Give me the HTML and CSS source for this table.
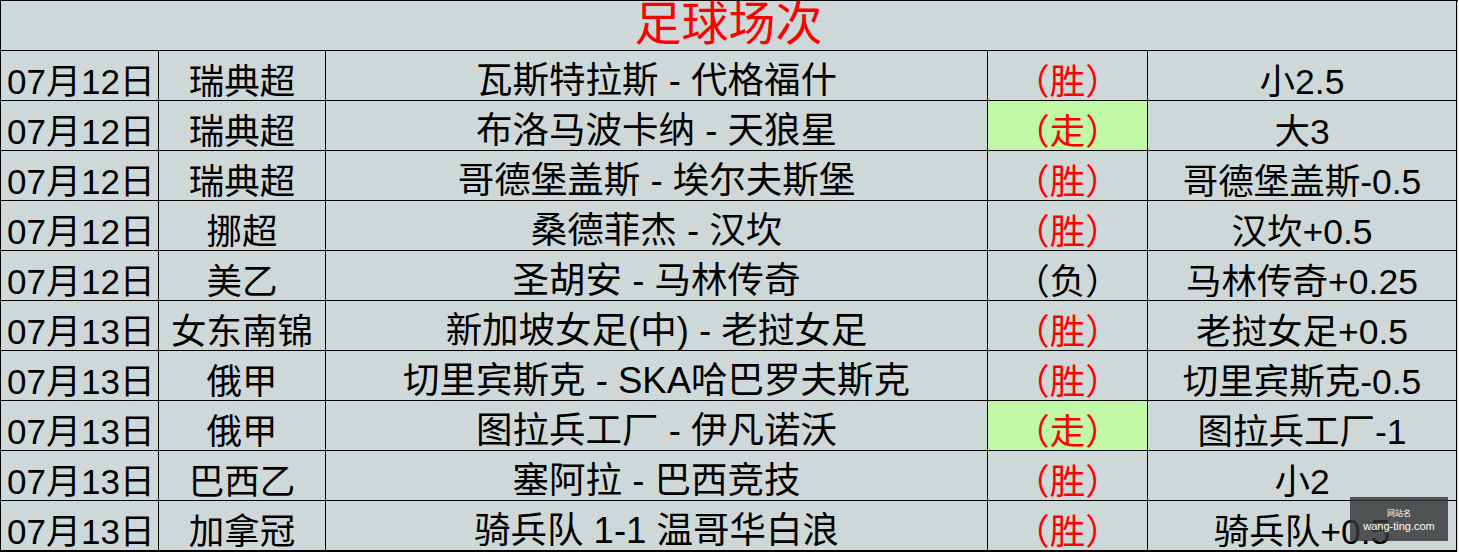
FILE: index.html
```html
<!DOCTYPE html>
<html lang="zh-CN">
<head>
<meta charset="utf-8">
<title>足球场次</title>
<link rel="stylesheet" href="styles.css">
</head>
<body>
<div class="sheet">
  <div class="cell title">足球场次</div>

  <div class="cell date">07月12日</div><div class="cell">瑞典超</div><div class="cell match">瓦斯特拉斯 - 代格福什</div><div class="cell red">（胜）</div><div class="cell">小2.5</div>
  <div class="cell date">07月12日</div><div class="cell">瑞典超</div><div class="cell match">布洛马波卡纳 - 天狼星</div><div class="cell red push">（走）</div><div class="cell">大3</div>
  <div class="cell date">07月12日</div><div class="cell">瑞典超</div><div class="cell match">哥德堡盖斯 - 埃尔夫斯堡</div><div class="cell red">（胜）</div><div class="cell">哥德堡盖斯-0.5</div>
  <div class="cell date">07月12日</div><div class="cell">挪超</div><div class="cell match">桑德菲杰 - 汉坎</div><div class="cell red">（胜）</div><div class="cell">汉坎+0.5</div>
  <div class="cell date">07月12日</div><div class="cell">美乙</div><div class="cell match">圣胡安 - 马林传奇</div><div class="cell">（负）</div><div class="cell">马林传奇+0.25</div>
  <div class="cell date">07月13日</div><div class="cell">女东南锦</div><div class="cell match">新加坡女足(中) - 老挝女足</div><div class="cell red">（胜）</div><div class="cell">老挝女足+0.5</div>
  <div class="cell date">07月13日</div><div class="cell">俄甲</div><div class="cell match">切里宾斯克 - SKA哈巴罗夫斯克</div><div class="cell red">（胜）</div><div class="cell">切里宾斯克-0.5</div>
  <div class="cell date">07月13日</div><div class="cell">俄甲</div><div class="cell match">图拉兵工厂 - 伊凡诺沃</div><div class="cell red push">（走）</div><div class="cell">图拉兵工厂-1</div>
  <div class="cell date">07月13日</div><div class="cell">巴西乙</div><div class="cell match">塞阿拉 - 巴西竞技</div><div class="cell red">（胜）</div><div class="cell">小2</div>
  <div class="cell date last">07月13日</div><div class="cell last">加拿冠</div><div class="cell match last">骑兵队 1-1 温哥华白浪</div><div class="cell red last">（胜）</div><div class="cell last">骑兵队+0.5</div>
</div>
<div class="watermark">
  <span class="wm-name">网站名</span>
  <span class="wm-url">wang-ting.com</span>
</div>
</body>
</html>
```

FILE: styles.css
```css
html, body {
  margin: 0;
  padding: 0;
  background: #ffffff;
}
body {
  position: relative;
  width: 1459px;
  height: 552px;
  overflow: hidden;
}
.sheet {
  display: grid;
  grid-template-columns: 158px 167px 662px 160px 309px;
  grid-template-rows: 50px repeat(9, 50px) 51px;
  width: 1457px;
  border-top: 1px solid #000;
  border-left: 1px solid #000;
  background: #cfd8d9;
  font-family: "Liberation Sans", "Noto Sans CJK SC", sans-serif;
  font-size: 35.5px;
  color: #000;
}
.cell {
  box-sizing: border-box;
  border-right: 1px solid #000;
  border-bottom: 1px solid #000;
  padding-top: 13px;
  line-height: 36px;
  text-align: center;
  white-space: nowrap;
  overflow: visible;
}
.cell.date {
  text-align: left;
  padding-left: 6px;
  font-size: 35px;
}
.cell.match {
  font-size: 36.5px;
  padding-top: 12px;
}
.cell.last {
  border-bottom: 2px solid #000;
}
.cell.title {
  grid-column: 1 / -1;
  padding-top: 0;
  font-size: 47px;
  line-height: 46px;
  color: #ff0000;
}
.red { color: #ff0000; }
.push { background: #c0f8a6; }
.watermark {
  position: absolute;
  left: 1350px;
  top: 497px;
  width: 98px;
  height: 44px;
  background: rgba(50, 54, 55, 0.82);
  display: flex;
  flex-direction: column;
  align-items: center;
  justify-content: center;
  color: #ffffff;
  font-family: "Liberation Sans", "Noto Sans CJK SC", sans-serif;
  line-height: 12px;
  padding-top: 2px;
  box-sizing: border-box;
}
.wm-name { font-size: 8px; }
.wm-url { font-size: 11px; }
```
